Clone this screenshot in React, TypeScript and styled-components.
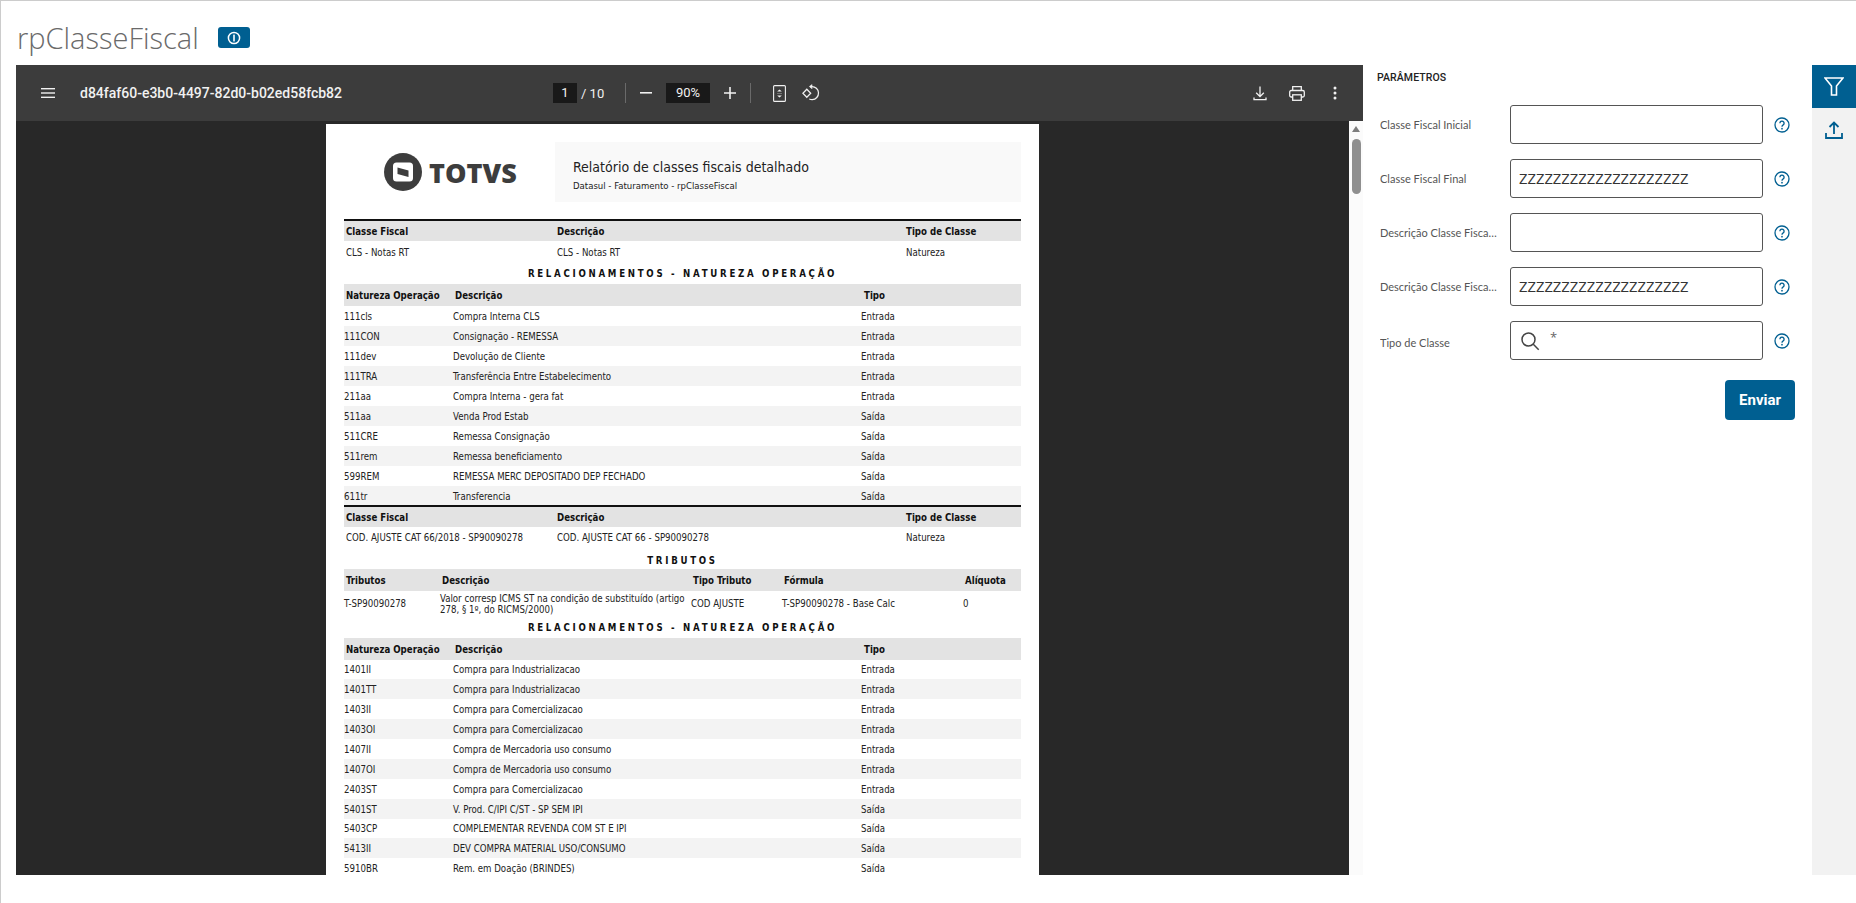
import React from "react";
import styled, { createGlobalStyle } from "styled-components";

const Global = createGlobalStyle`
  html, body { margin: 0; padding: 0; background: #fff; }
  body { font-family: "Open Sans", "Noto Sans", sans-serif; overflow: hidden; }
  #root { height: 903px; }
  * { box-sizing: border-box; }
`;

const Shell = styled.div`
  width: 1856px; height: 903px; border-top: 1px solid #ccc; border-left: 1px solid #ccc;
  display: flex; flex-direction: column; background: #fff; overflow: hidden;
`;
const TitleBar = styled.header`
  height: 64px; display: flex; align-items: center; padding: 9px 0 0 16px; gap: 19px;
`;
const Title = styled.h1`
  margin: 0; font: 300 29px/1 "Open Sans", sans-serif; color: #6a6a6a;
`;
const InfoBadge = styled.span`
  width: 32px; height: 21px; border-radius: 3px; background: #005f91;
  display: flex; align-items: center; justify-content: center;
`;
const Main = styled.main`
  height: 810px; display: flex; padding-left: 15px;
`;
const Viewer = styled.section`
  width: 1347px; flex: none; display: flex; flex-direction: column; background: #282828; overflow: hidden;
`;
const Toolbar = styled.div`
  height: 56px; flex: none; background: #3c3c3c; display: flex; align-items: center; position: relative;
  font-family: Roboto, sans-serif; color: #f1f1f1; z-index: 2;
`;
const Hamburger = styled.span`
  display: flex; width: 39px; margin-left: 25px; flex: none;
`;
const FileName = styled.span`
  font: 500 14px/1 Roboto, sans-serif; color: #f1f1f1; width: 473px; flex: none;
`;
const PageBox = styled.span<{ $w: number }>`
  height: 20px; width: ${(p) => p.$w}px; background: #191919; color: #f1f1f1; font: 400 13px/20px Roboto, sans-serif;
  text-align: center; flex: none;
`;
const TotalPages = styled.span`
  font: 400 13px/1 Roboto, sans-serif; width: 48px; padding-left: 4px; flex: none;
`;
const Sep = styled.span<{ $mr: number }>`
  width: 1px; height: 20px; background: #6a6a6a; margin-right: ${(p) => p.$mr}px; flex: none;
`;
const ToolIcon = styled.span<{ $w: number; $mr?: number; $ml?: number }>`
  display: flex; justify-content: center; align-items: center; width: ${(p) => p.$w}px;
  margin-right: ${(p) => p.$mr ?? 0}px; margin-left: ${(p) => p.$ml ?? 0}px; flex: none;
`;
const ViewerBody = styled.div`
  flex: 1; display: flex; min-height: 0;
`;
const Stage = styled.div`
  flex: 1; display: flex; justify-content: center; padding: 3px 0 0 0; overflow: hidden; min-width: 0;
`;
const Scrollbar = styled.div`
  width: 14px; flex: none; background: #fbfbfb; display: flex; flex-direction: column; align-items: center; padding-top: 5px;
`;
const ScrollArrow = styled.span`
  width: 0; height: 0; border-left: 4.5px solid transparent; border-right: 4.5px solid transparent; border-bottom: 6px solid #7d7d7d;
`;
const ScrollThumb = styled.span`
  width: 9px; height: 55px; margin-top: 7px; border-radius: 5px; background: #8f8f8f;
`;
const Sheet = styled.article`
  width: 713px; flex: none; height: 751px; background: #fff; padding: 18px 18px 0 18px; overflow: hidden; color: #222;
  font-family: "DejaVu Sans Condensed", "DejaVu Sans", sans-serif; font-stretch: condensed; font-size: 9.6px;
`;
const ReportHead = styled.div`
  height: 60px; margin-bottom: 17px; display: grid; grid-template-columns: 211px 1fr;
`;
const LogoWrap = styled.div`
  display: flex; align-items: center; gap: 7px; padding: 0 0 0 40px;
`;
const LogoText = styled.span`
  font: 800 27px/1 "Open Sans", sans-serif; color: #3d3d3d;
`;
const HeadBox = styled.div`
  background: #f9f9f9; padding: 16px 18px 0; display: flex; flex-direction: column; gap: 4px;
`;
const ReportTitle = styled.div`
  font-size: 14px; line-height: 18px; color: #222;
`;
const ReportSub = styled.div`
  font-size: 9.5px; line-height: 12px; color: #222;
`;
const Table = styled.div<{ $top?: boolean; $pull?: boolean }>`
  ${(p) => (p.$top ? "border-top: 2px solid #111;" : "")}
  ${(p) => (p.$pull ? "margin-top: -1px; position: relative;" : "")}
`;
const HeadRow = styled.div<{ $cols: string; $h?: number }>`
  display: grid; grid-template-columns: ${(p) => p.$cols}; height: ${(p) => p.$h ?? 22}px; align-items: center; background: #e3e3e3;
  font-weight: 700; padding-left: 2px; color: #111;
`;
const Row = styled.div<{ $cols: string; $alt?: boolean; $h?: number; $pl?: number }>`
  display: grid; grid-template-columns: ${(p) => p.$cols}; height: ${(p) => p.$h ?? 20}px; align-items: center; padding-left: ${(p) => p.$pl ?? 0}px;
  background: ${(p) => (p.$alt ? "#f3f3f3" : "#fff")};
`;
const WrappedCell = styled.span`
  line-height: 11px;
`;
const SectionTitle = styled.div<{ $h: number; $pt?: number }>`
  height: ${(p) => p.$h}px; padding-top: ${(p) => p.$pt ?? 0}px; display: flex; align-items: center; justify-content: center; font-weight: 700; letter-spacing: 2.72px; color: #111; font-size: 9.6px;
`;
const Panel = styled.aside`
  width: 449px; flex: none; display: flex; flex-direction: column; padding: 0 0 0 14px; position: relative;
`;
const PanelTitle = styled.h2`
  margin: 0; height: 40px; padding-top: 6px; font: 500 10.5px/14px Roboto, sans-serif; color: #222; letter-spacing: .1px;
`;
const Field = styled.div`
  height: 39px; margin-bottom: 15px; display: flex; align-items: center; padding-left: 3px;
`;
const Label = styled.label<{ $mt?: number }>`
  width: 130px; flex: none; margin-top: ${(p) => p.$mt ?? 0}px; font: 400 11px/1.2 Lato, sans-serif; color: #555; white-space: nowrap; overflow: hidden; text-overflow: ellipsis; padding-right: 12px;
`;
const InputBox = styled.div`
  width: 253px; height: 39px; border: 1px solid #555; border-radius: 3px; flex: none; display: flex; align-items: center; padding-left: 8px;
  font: 400 14.8px/1 "Open Sans", sans-serif; color: #333;
`;
const Help = styled.span`
  display: flex; margin-left: 11px;
`;
const Star = styled.span`
  margin-left: 10px; margin-top: -6px; font-size: 13px; color: #666;
`;
const Actions = styled.div`
  display: flex; justify-content: flex-end; padding: 5px 0 0 0; width: 418px;
`;
const SendButton = styled.button`
  width: 70px; height: 40px; border: 0; border-radius: 4px; background: #005f91; color: #fff; font: 700 15px/1 Roboto, sans-serif;
`;
const SideRail = styled.nav`
  width: 44px; flex: none; background: #f2f2f2; display: flex; flex-direction: column;
`;
const RailTab = styled.div<{ $active?: boolean }>`
  height: 43px; display: flex; align-items: center; justify-content: center; background: ${(p) => (p.$active ? "#005f91" : "transparent")};
`;

const C1 = "211px 349px 1fr";
const C2 = "109px 408px 1fr";
const C2H = "109px 409px 1fr";
const C3 = "96px 251px 91px 181px 1fr";

const rows1: [string, string, string][] = [
  ["111cls", "Compra Interna CLS", "Entrada"],
  ["111CON", "Consignação - REMESSA", "Entrada"],
  ["111dev", "Devolução de Cliente", "Entrada"],
  ["111TRA", "Transferência Entre Estabelecimento", "Entrada"],
  ["211aa", "Compra Interna - gera fat", "Entrada"],
  ["511aa", "Venda Prod Estab", "Saída"],
  ["511CRE", "Remessa Consignação", "Saída"],
  ["511rem", "Remessa beneficiamento", "Saída"],
  ["599REM", "REMESSA MERC DEPOSITADO DEP FECHADO", "Saída"],
  ["611tr", "Transferencia", "Saída"],
];
const rows2: [string, string, string][] = [
  ["1401II", "Compra para Industrializacao", "Entrada"],
  ["1401TT", "Compra para Industrializacao", "Entrada"],
  ["1403II", "Compra para Comercializacao", "Entrada"],
  ["1403OI", "Compra para Comercializacao", "Entrada"],
  ["1407II", "Compra de Mercadoria uso consumo", "Entrada"],
  ["1407OI", "Compra de Mercadoria uso consumo", "Entrada"],
  ["2403ST", "Compra para Comercializacao", "Entrada"],
  ["5401ST", "V. Prod. C/IPI C/ST - SP SEM IPI", "Saída"],
  ["5403CP", "COMPLEMENTAR REVENDA COM ST E IPI", "Saída"],
  ["5413II", "DEV COMPRA MATERIAL USO/CONSUMO", "Saída"],
  ["5910BR", "Rem. em Doação (BRINDES)", "Saída"],
];

const HelpIcon = () => (
  <Help>
    <svg width="16" height="16" viewBox="0 0 16 16" fill="none">
      <circle cx="8" cy="8" r="7" stroke="#005f91" strokeWidth="1.3" />
      <path d="M5.9 6.2a2.1 2.1 0 1 1 3.3 1.7c-.8.5-1.2.9-1.2 1.8" stroke="#005f91" strokeWidth="1.3" fill="none" />
      <circle cx="8" cy="11.7" r=".85" fill="#005f91" />
    </svg>
  </Help>
);

const fields = [
  { label: "Classe Fiscal Inicial", value: "" },
  { label: "Classe Fiscal Final", value: "ZZZZZZZZZZZZZZZZZZZZ" },
  { label: "Descrição Classe Fiscal Inicial", value: "" },
  { label: "Descrição Classe Fiscal Final", value: "ZZZZZZZZZZZZZZZZZZZZ" },
];

export default function App() {
  return (
    <Shell>
      <Global />
      <TitleBar>
        <Title>rpClasseFiscal</Title>
        <InfoBadge>
          <svg width="14" height="14" viewBox="0 0 14 14" fill="none">
            <circle cx="7" cy="7" r="5.6" stroke="#fff" strokeWidth="1.5" />
            <rect x="6.2" y="3.6" width="1.6" height="6.8" rx=".5" fill="#fff" />
          </svg>
        </InfoBadge>
      </TitleBar>
      <Main>
        <Viewer>
          <Toolbar>
            <Hamburger>
              <svg width="14" height="10" viewBox="0 0 14 10" fill="#f1f1f1">
                <rect width="14" height="1.4" />
                <rect y="4.3" width="14" height="1.4" />
                <rect y="8.6" width="14" height="1.4" />
              </svg>
            </Hamburger>
            <FileName>d84faf60-e3b0-4497-82d0-b02ed58fcb82</FileName>
            <PageBox $w={24}>1</PageBox>
            <TotalPages>/ 10</TotalPages>
            <Sep $mr={14} />
            <ToolIcon $w={12} $mr={14}>
              <svg width="12" height="2"><rect width="12" height="1.6" fill="#f1f1f1" /></svg>
            </ToolIcon>
            <PageBox $w={44}>90%</PageBox>
            <ToolIcon $w={12} $mr={14} $ml={14}>
              <svg width="12" height="12"><path d="M0 5.2h12v1.6H0zM5.2 0h1.6v12H5.2z" fill="#f1f1f1" /></svg>
            </ToolIcon>
            <Sep $mr={21} />
            <ToolIcon $w={14} $mr={16}>
              <svg width="13" height="17" viewBox="0 0 13 17" fill="none">
                <rect x=".6" y=".6" width="11.8" height="15.8" rx="1" stroke="#f1f1f1" strokeWidth="1.1" />
                <path d="M4.2 6.6 6.5 4.4 8.8 6.6zM4.2 10.4 6.5 12.6 8.8 10.4z" fill="#f1f1f1" />
                <path d="M4 8.5h5" stroke="#9a9a9a" strokeWidth=".6" />
              </svg>
            </ToolIcon>
            <ToolIcon $w={18} $mr={433}>
              <svg width="18" height="18" viewBox="0 0 18 18" fill="none" stroke="#f1f1f1" strokeWidth="1.25">
                <path d="M4.8 5.2.9 9.3l3.9 4 3.9-4z" />
                <path d="M8.2 2.6h1.5a6.5 6.5 0 0 1 .6 13 6.5 6.5 0 0 1-3-.6" />
                <path d="M10.3.7 8 2.6l2.3 1.9" />
              </svg>
            </ToolIcon>
            <ToolIcon $w={14} $mr={22}>
              <svg width="14" height="15" viewBox="0 0 14 15" fill="none" stroke="#f1f1f1" strokeWidth="1.3">
                <path d="M7 .5v10M3.2 6.8 7 10.6l3.8-3.8" />
                <path d="M1 11.5v2.2h12v-2.2" />
              </svg>
            </ToolIcon>
            <ToolIcon $w={16} $mr={28}>
              <svg width="16" height="15" viewBox="0 0 16 15" fill="none" stroke="#f1f1f1" strokeWidth="1.3">
                <path d="M3.7 4.5V.7h8.6v3.8" />
                <rect x=".7" y="4.5" width="14.6" height="6.5" rx="1.5" />
                <rect x="3.7" y="8.8" width="8.6" height="5.5" fill="#3c3c3c" />
              </svg>
            </ToolIcon>
            <ToolIcon $w={4}>
              <svg width="4" height="14" fill="#f1f1f1"><circle cx="2" cy="2" r="1.5" /><circle cx="2" cy="7" r="1.5" /><circle cx="2" cy="12" r="1.5" /></svg>
            </ToolIcon>
          </Toolbar>
          <ViewerBody>
            <Stage>
              <Sheet>
                <ReportHead>
                  <LogoWrap>
                    <svg width="38" height="38" viewBox="0 0 38 38">
                      <circle cx="19" cy="19" r="19" fill="#3d3d3d" />
                      <rect x="9" y="9.5" width="20" height="19" rx="3.5" fill="#fff" />
                      <path d="M13.5 14.5 24.5 17.5V24L13.5 21z" fill="#3d3d3d" />
                    </svg>
                    <LogoText>TOTVS</LogoText>
                  </LogoWrap>
                  <HeadBox>
                    <ReportTitle>Relatório de classes fiscais detalhado</ReportTitle>
                    <ReportSub>Datasul - Faturamento - rpClasseFiscal</ReportSub>
                  </HeadBox>
                </ReportHead>
                <Table $top>
                  <HeadRow $cols={C1} $h={20}><span>Classe Fiscal</span><span>Descrição</span><span>Tipo de Classe</span></HeadRow>
                  <Row $cols={C1} $h={22} $pl={2}><span>CLS - Notas RT</span><span>CLS - Notas RT</span><span>Natureza</span></Row>
                </Table>
                <SectionTitle $h={21}>RELACIONAMENTOS - NATUREZA OPERAÇÃO</SectionTitle>
                <Table>
                  <HeadRow $cols={C2H}><span>Natureza Operação</span><span>Descrição</span><span>Tipo</span></HeadRow>
                  {rows1.map((r, i) => (
                    <Row key={r[0]} $cols={C2} $alt={i % 2 === 1}>
                      <span>{r[0]}</span><span>{r[1]}</span><span>{r[2]}</span>
                    </Row>
                  ))}
                </Table>
                <Table $top $pull>
                  <HeadRow $cols={C1} $h={20}><span>Classe Fiscal</span><span>Descrição</span><span>Tipo de Classe</span></HeadRow>
                  <Row $cols={C1} $h={21} $pl={2}><span>COD. AJUSTE CAT 66/2018 - SP90090278</span><span>COD. AJUSTE CAT 66 - SP90090278</span><span>Natureza</span></Row>
                </Table>
                <SectionTitle $h={21} $pt={3}>TRIBUTOS</SectionTitle>
                <Table>
                  <HeadRow $cols={C3}><span>Tributos</span><span>Descrição</span><span>Tipo Tributo</span><span>Fórmula</span><span>Alíquota</span></HeadRow>
                  <Row $cols={C3} $h={25}>
                    <span>T-SP90090278</span>
                    <WrappedCell>Valor corresp ICMS ST na condição de substituído (artigo 278, § 1º, do RICMS/2000)</WrappedCell>
                    <span>COD AJUSTE</span><span>T-SP90090278 - Base Calc</span><span>0</span>
                  </Row>
                </Table>
                <SectionTitle $h={22} $pt={1}>RELACIONAMENTOS - NATUREZA OPERAÇÃO</SectionTitle>
                <Table>
                  <HeadRow $cols={C2H}><span>Natureza Operação</span><span>Descrição</span><span>Tipo</span></HeadRow>
                  {rows2.map((r, i) => (
                    <Row key={r[0]} $cols={C2} $alt={i % 2 === 1} $h={i === 0 || i === 8 ? 19 : 20}>
                      <span>{r[0]}</span><span>{r[1]}</span><span>{r[2]}</span>
                    </Row>
                  ))}
                </Table>
              </Sheet>
            </Stage>
            <Scrollbar><ScrollArrow /><ScrollThumb /></Scrollbar>
          </ViewerBody>
        </Viewer>
        <Panel>
          <PanelTitle>PARÂMETROS</PanelTitle>
          {fields.map((f) => (
            <Field key={f.label}>
              <Label>{f.label}</Label>
              <InputBox>{f.value}</InputBox>
              <HelpIcon />
            </Field>
          ))}
          <Field>
            <Label $mt={4}>Tipo de Classe</Label>
            <InputBox>
              <svg width="20" height="20" viewBox="0 0 20 20" fill="none" stroke="#444" strokeWidth="1.5" style={{ marginLeft: 1 }}>
                <circle cx="8.5" cy="8.5" r="6.5" />
                <path d="m13.3 13.3 5.4 5.4" />
              </svg>
              <Star>*</Star>
            </InputBox>
            <HelpIcon />
          </Field>
          <Actions><SendButton>Enviar</SendButton></Actions>
        </Panel>
        <SideRail>
          <RailTab $active>
            <svg width="20" height="19" viewBox="0 0 20 19" fill="none" stroke="#fff" strokeWidth="1.6">
              <path d="M1 1h18l-6.5 8v9h-5V9z" />
            </svg>
          </RailTab>
          <RailTab>
            <svg width="18" height="18" viewBox="0 0 18 18" fill="none" stroke="#005f91" strokeWidth="1.8">
              <path d="M9 13V1.5M4.5 6 9 1.5 13.5 6" />
              <path d="M1 12v5h16v-5" />
            </svg>
          </RailTab>
        </SideRail>
      </Main>
    </Shell>
  );
}
